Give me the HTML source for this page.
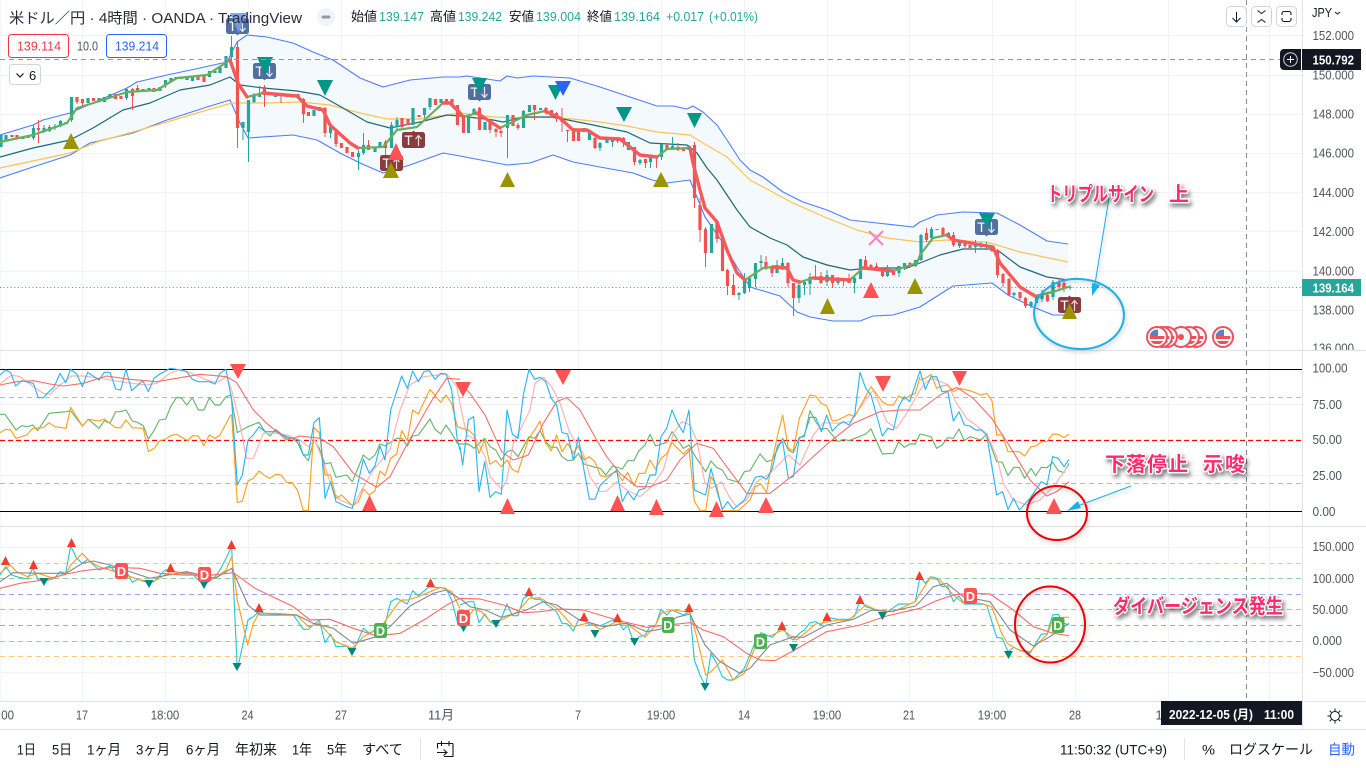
<!DOCTYPE html>
<html lang="ja"><head><meta charset="utf-8"><title>米ドル／円</title>
<style>
html,body{margin:0;padding:0;background:#fff;width:1366px;height:768px;overflow:hidden}
svg{display:block;position:absolute;left:0;top:0}
text{font-family:"Liberation Sans","Noto Sans CJK JP",sans-serif}
.p{font-size:13px;fill:#50535e}
.t{font-size:13px;fill:#50535e;text-anchor:middle}
.o{font-size:13px;fill:#26a69a}
.k{font-size:13px;fill:#131722}
.b{font-size:14px;fill:#131722}
.a{font-size:20px;font-weight:bold;fill:#ff2a6d;stroke:#fff;stroke-width:3px;paint-order:stroke;stroke-linejoin:round;filter:drop-shadow(2px 3px 2px rgba(0,0,0,.5))}
.l polyline{fill:none;stroke-linejoin:round}
.lab{font-size:13px;font-weight:bold;fill:#fff;text-anchor:middle}
</style></head><body>
<svg width="1366" height="768" viewBox="0 0 1366 768" xmlns="http://www.w3.org/2000/svg">
<defs>
<clipPath id="fc"><circle cx="0" cy="0" r="7.4"/></clipPath>
<g id="flag"><circle r="10" fill="#fff" stroke="#f0505a" stroke-width="2"/><g clip-path="url(#fc)"><rect x="-8" y="-8" width="16" height="16" fill="#fff"/><rect x="-8" y="-1" width="16" height="3" fill="#f0505a"/><rect x="-8" y="4" width="16" height="3" fill="#f0505a"/><rect x="-8" y="-8" width="9" height="7" fill="#5c80c8"/></g></g>
<g id="tdn"><rect x="0" y="0" width="23" height="16" rx="2.5" fill="#52709f"/><path d="M10 16h3l-1.500 1.500z" fill="#52709f"/><text x="6.500" y="13" font-size="14" fill="#fff" text-anchor="middle">T</text><path d="M16.500 3v10M13.500 10l3 3.500 3-3.500" stroke="#e4e8f0" stroke-width="1.200" fill="none"/></g>
<g id="tup"><rect x="0" y="0" width="23" height="16" rx="2.500" fill="#8a3c3c"/><path d="M10 0h3l-1.500-1.500z" fill="#8a3c3c"/><text x="6.500" y="13" font-size="14" fill="#fff" text-anchor="middle">T</text><path d="M16.500 14V4M13.500 7l3-3.500 3 3.500" stroke="#e8dcdc" stroke-width="1.200" fill="none"/></g>
</defs>

<!-- grid -->
<g stroke="#f0f3fa" stroke-width="1" fill="none">
<path d="M0 35.5H1302M0 75.5H1302M0 114.5H1302M0 153.5H1302M0 192.5H1302M0 231.5H1302M0 271.5H1302M0 310.5H1302"/>
<path d="M0 404.5H1302M0 475.5H1302"/>
<path d="M0 547.5H1302M0 578.5H1302M0 609.5H1302M0 641.5H1302M0 672.5H1302"/>
<path d="M1 0V701M82.5 0V701M165.5 0V701M248.5 0V701M341.5 0V701M441.5 0V701M578.5 0V701M661.5 0V701M744.5 0V701M827.5 0V701M909.5 0V701M992.5 0V701M1075.5 0V701M1168.5 0V701M1269.5 0V701"/>
</g>
<!-- band fill -->
<polygon fill="#f4f9fe" points="0,135 33,125 43,120 70,113 127,88 137,82 167,75 200,68 227,62 237,42 247,35 267,37 293,43 313,52 333,60 360,78 383,87 410,80 443,77 460,77 467,76 500,81 507,76 517,78 533,76 570,78 600,87 633,98 657,106 673,106 687,109 693,106 703,112 717,125 727,140 740,160 750,170 763,177 783,192 803,202 827,210 850,220 877,223 913,227 920,222 937,215 963,212 997,213 1020,225 1047,241 1068,244 1068,315 1053,315 1033,307 1008,295 992,283 953,286 920,307 893,315 873,316 860,321 833,321 810,317 797,312 780,296 750,287 737,267 723,243 705,217 690,180 667,183 652,180 633,173 600,167 573,162 553,155 530,163 507,165 460,156 443,153 410,165 383,173 360,163 340,153 317,140 293,135 248,138 240,123 230,100 207,107 167,120 133,133 90,143 70,155 33,167 0,178"/>
<!-- pane separators and axes -->
<path d="M0 350.5H1366M0 526.5H1366M0 701.5H1366M0 729.5H1366" stroke="#e0e3eb" stroke-width="1.2"/>
<path d="M1302.5 0V729" stroke="#e0e3eb"/>
<!-- pane1 lines -->
<g fill="none" stroke-linejoin="round">
<polyline stroke="#4f7dfb" stroke-width="1.1" points="0,135 33,125 43,120 70,113 127,88 137,82 167,75 200,68 227,62 237,42 247,35 267,37 293,43 313,52 333,60 360,78 383,87 410,80 443,77 460,77 467,76 500,81 507,76 517,78 533,76 570,78 600,87 633,98 657,106 673,106 687,109 693,106 703,112 717,125 727,140 740,160 750,170 763,177 783,192 803,202 827,210 850,220 877,223 913,227 920,222 937,215 963,212 997,213 1020,225 1047,241 1068,244"/>
<polyline stroke="#4f7dfb" stroke-width="1.1" points="0,178 33,167 70,155 90,143 133,133 167,120 207,107 230,100 240,123 248,138 293,135 317,140 340,153 360,163 383,173 410,165 443,153 460,156 507,165 530,163 553,155 573,162 600,167 633,173 652,180 667,183 690,180 705,217 723,243 737,267 750,287 780,296 797,312 810,317 833,321 860,321 873,316 893,315 920,307 953,286 992,283 1008,295 1033,307 1053,315 1068,315"/>
<polyline stroke="#fbc44f" stroke-width="1.2" points="0,168 70,153 97,142 133,132 167,122 207,110 232,103 267,103 300,102 330,105 360,113 387,119 420,119 460,113 493,117 520,118 543,117 573,119 600,122 627,126 657,132 690,135 703,143 727,157 750,180 793,203 827,218 857,230 887,238 920,242 947,240 987,242 1020,252 1068,262"/>
<polyline stroke="#1d6a78" stroke-width="1.2" points="0,157 33,148 70,140 93,128 123,110 150,103 180,90 210,85 230,77 240,85 263,88 297,91 320,95 343,108 367,122 390,128 420,122 447,115 460,116 493,120 503,122 523,117 553,117 593,125 627,132 650,143 687,145 697,153 707,168 717,180 737,210 750,227 770,238 787,245 803,257 827,265 850,270 870,268 907,268 920,263 940,255 963,249 990,249 1000,252 1020,267 1047,277 1068,280"/>
</g>
<!-- candle wicks -->
<path fill="none" stroke="#26a69a" stroke-width="1" d="M33.5 125V140M44 125V133M49.5 125V132M55 124V130M60.5 120V127M71.5 97V122M126.5 88V100M165.5 80V88M231.5 36V65M243 122V140M248.5 100V162M254 93V103M259.5 86V97M330.5 125V138M358.5 150V170M363.5 133V155M391.5 122V148M397 117V130M424.5 108V118M430 98V110M474 108V115M507.5 115V158M523.5 110V128M600 142V151M612.5 138V147M640 159V165M650.5 157V168M661.5 143V160M672.5 137V148M689 145V150M739 292V300M744.5 273V294M749.5 278V292M755.5 263V287M761 255V268M777 260V273M782.5 258V270M799 283V303M804.5 280V295M810 273V295M827 270V286M838 277V285M854.5 277V293M887.5 265V277M899 266V277M904.5 263V270M915.5 260V267M921 234V261M931.5 227V240M948.5 232V237M959.5 240V248M975.5 240V253M981 242V249M986.5 242V250M1014 292V298M1031 301V308M1042 290V302M1053 280V300M1070 285V290"/>
<path fill="none" stroke="#ef5350" stroke-width="1" d="M38.5 120V143M77 97V104M82.5 99V108M132.5 88V110M137.5 85V92M237.5 42V148M264.5 85V107M281 94V103M303.5 98V123M325 107V137M336 130V147M368.5 140V148M385.5 140V157M402 118V128M479.5 107V130M490 120V133M496 128V137M501 130V137M518 123V130M534.5 105V120M546 107V115M556.5 112V122M562 108V132M567.5 130V142M595 137V149M617.5 137V143M623.5 137V147M634.5 147V165M645.5 159V168M656.5 157V168M667 143V150M678 143V151M694.5 142V208M700 198V242M705.5 227V267M717 222V243M727.5 269V295M733.5 274V295M766 256V270M772 265V277M788 262V287M793.5 283V316M815.5 265V280M821 272V284M832.5 275V288M843.5 278V286M849 274V282M865.5 256V267M871 264V268M876.5 263V270M882.5 268V277M910 262V268M926.5 228V242M943 227V236M953.5 232V247M965 240V248M992 245V252M997.5 249V278M1003 273V287M1009 278V296M1020 292V301M1025.5 297V308M1047.5 293V302M1059 278V290M1064 279V292"/>
<!-- candle bodies -->
<path fill="none" stroke="#26a69a" stroke-width="3.2" d="M1 135V147M6 135V140M23 137V139M28 136V138M33.5 128V138M44 128V132M49.5 127V131M55 126V128M60.5 121V125M66 122V124M71.5 97V120M88 98V103M99 98V102M104.5 97V102M110 94V98M126.5 89V98M143 89V92M149 88V91M160 87V91M165.5 80V85M171 78V82M181.5 77V79M187 76V80M192.5 76V81M209.5 71V77M215 71V73M220 67V73M226 56V68M231.5 47V57M243 122V128M248.5 100V132M254 95V102M259.5 93V97M270 92V95M275.5 93V97M314 110V116M319.5 107V111M330.5 127V133M358.5 153V157M363.5 145V153M375 148V152M380 142V148M391.5 125V148M397 120V127M413 108V125M424.5 108V115M430 98V107M441 99V103M468.5 115V133M474 109V115M485 122V130M507.5 115V128M523.5 111V128M529.5 105V112M540.5 108V110M584 128V132M589.5 130V140M600 143V148M607 140V143M612.5 139V142M628.5 142V150M640 160V163M650.5 157V162M661.5 144V157M672.5 146V148M689 146V150M711.5 224V253M739 293V295M744.5 279V293M749.5 278V288M755.5 263V279M761 261V263M777 265V273M782.5 263V266M799 285V298M804.5 282V285M810 277V284M827 275V282M838 278V283M854.5 278V283M860.5 259V279M887.5 270V276M899 266V273M904.5 263V267M915.5 260V266M921 235V260M931.5 229V238M948.5 233V237M959.5 242V246M975.5 243V247M981 245V247M986.5 245V247M1014 293V295M1031 302V306M1036.5 295V303M1042 294V299M1053 282V297M1070 287V288"/>
<path fill="none" stroke="#ef5350" stroke-width="3.2" d="M12 135V137M17 135V139M38.5 128V130M77 97V102M82.5 99V103M93.5 98V101M115.5 94V99M121 96V99M132.5 89V96M137.5 88V91M154 88V92M176 77V79M198 76V80M204 76V82M237.5 47V128M264.5 87V94M281 94V96M287 94V97M292.5 94V97M298 94V98M303.5 99V114M308.5 112V116M325 108V133M336 132V144M341.5 143V148M347 147V153M352.5 152V157M368.5 145V150M385.5 142V148M402 118V127M408 119V125M419 115V117M435.5 99V105M446.5 99V103M452 99V105M457.5 105V125M463.5 115V133M479.5 108V130M490 122V130M496 129V132M501 131V133M513 115V126M518 125V128M534.5 105V110M546 108V113M551.5 110V116M556.5 113V119M562 118V122M567.5 130V131M573.5 128V141M578.5 131V141M595 138V148M617.5 138V141M623.5 138V143M634.5 147V162M645.5 159V163M656.5 157V158M667 145V150M678 147V150M683.5 148V151M694.5 145V198M700 205V230M705.5 229V253M717 222V239M722.5 240V271M727.5 270V286M733.5 285V295M766 262V268M772 266V273M788 263V283M793.5 283V298M815.5 277V279M821 276V283M832.5 275V283M843.5 279V281M849 279V283M865.5 260V267M871 265V267M876.5 266V270M882.5 269V276M893.5 270V275M910 263V267M926.5 233V240M937 229V230M943 228V236M953.5 235V245M965 243V246M970 245V248M992 246V251M997.5 250V275M1003 274V283M1009 279V295M1020 292V298M1025.5 298V306M1047.5 295V301M1059 282V287M1064 283V288"/>
<!-- thick MA -->
<g fill="none" stroke-linejoin="round" stroke-linecap="round">
<path stroke="#6aae5e" stroke-width="2.2" d="M0 142L33 135 67 123 77 108 103 100 127 92 157 90 177 78 207 75 230 60M247 97L263 93M358 148L383 147 397 130 417 127 443 103M463 117L477 113M500 128L527 115 545 111M657 157L667 149 690 148M745 280L763 268 773 267M800 282L813 278M850 280L863 268M893 271L917 263 920 255 933 238 947 235M1035 296L1053 292 1068 287"/>
<path stroke="#f55a5a" stroke-width="3.4" d="M230 60L238 83 247 97M263 93L297 96 307 106 323 110 330 125 350 143 358 148M443 103L450 103 460 113 463 117M477 113L500 128M545 111L560 118 573 130 587 130 600 138 620 139 640 155 657 157M690 148L693 163 700 190 705 208 717 222 727 250 737 273 745 280M773 267L787 268 793 280 800 282M813 278L850 280M863 268L893 271M947 235L953 240 993 247 1000 263 1020 287 1035 296"/>
</g>
<!-- pane 1 markers -->
<use href="#tdn" x="226" y="18"/><polygon points="230,13 247,13 238.5,33" fill="#7a9ce8" opacity=".9"/>
<use href="#tdn" x="253" y="63"/><polygon points="257,57 273,57 265,75" fill="#009688"/>
<polygon points="317,80 333,80 325,96" fill="#009688"/>
<use href="#tup" x="402" y="132"/><use href="#tup" x="380" y="155"/>
<polygon points="396,143 404,160 388,160" fill="#ff5252"/>
<polygon points="391,162 399,178 383,178" fill="#9b9400"/>
<polygon points="71,133 79,149 63,149" fill="#9b9400"/>
<use href="#tdn" x="468" y="84"/><polygon points="472,78 487,78 479.5,93" fill="#009688"/>
<polygon points="548,85 563,85 555.5,100" fill="#009688"/>
<polygon points="555,81 571,81 563,96" fill="#2962ff"/>
<polygon points="616,107 632,107 624,122" fill="#009688"/>
<polygon points="687,113 702,113 694.5,128" fill="#009688"/>
<polygon points="507.5,172 515,187 500,187" fill="#9b9400"/>
<polygon points="661,172 669,187 653,187" fill="#9b9400"/>
<polygon points="827.5,298 835,314 820,314" fill="#9b9400"/>
<polygon points="871,282 879,298 863,298" fill="#ff5252"/>
<polygon points="915,278 923,294 907,294" fill="#9b9400"/>
<path d="M869 231L883 245M883 231L869 245" stroke="#ff80c0" stroke-width="2"/>
<use href="#tdn" x="975" y="219"/><polygon points="979,213 995,213 987,228" fill="#009688"/>
<use href="#tup" x="1058" y="297"/><polygon points="1069.5,303 1077,319 1062,319" fill="#9b9400"/>
<!-- flags -->
<use href="#flag" x="1223" y="337"/>
<use href="#flag" x="1196" y="337"/><use href="#flag" x="1189" y="337"/>
<circle cx="1181" cy="337" r="10" fill="#f4f6fb" stroke="#f0505a" stroke-width="2"/><circle cx="1181" cy="337" r="3" fill="#f0505a"/>
<use href="#flag" x="1167" y="337"/><use href="#flag" x="1162" y="337"/><use href="#flag" x="1157" y="337"/>
<!-- dotted last price -->
<path d="M0 287.5H1302" stroke="#26a69a" stroke-width="1" stroke-dasharray="1 2.6"/>
<!-- crosshair -->
<path d="M0 59.5H1280" stroke="#9598a1" stroke-width="1" stroke-dasharray="5 4"/>
<path d="M1246.5 0V700" stroke="#868993" stroke-width="1" stroke-dasharray="5 4"/>

<!-- pane 2 levels -->
<path d="M0 397.5H1302M0 483.5H1302" stroke="#b8b8b8" stroke-width="1" stroke-dasharray="5 4"/>
<path d="M0 440.5H1302" stroke="#f00000" stroke-width="1.3" stroke-dasharray="5 3"/>
<path d="M0 369.5H1302M0 511.5H1302" stroke="#000" stroke-width="1"/>

<!-- pane 2 lines -->
<g class="l" transform="translate(0,360) scale(.33333)">
<polyline stroke="#66b56a" stroke-width="3.4" points="0,163 15,163 48,210 65,197 83,200 98,195 113,212 147,160 198,155 212,152 247,198 265,178 297,205 313,182 330,190 347,155 362,155 378,150 397,183 412,187 430,197 445,237 462,212 478,180 497,177 512,140 530,112 545,115 560,135 577,113 595,150 612,150 628,113 645,135 660,135 678,110 693,105 712,218 744,200 777,187 795,215 810,228 827,208 860,235 877,235 893,248 910,285 925,302 942,240 958,265 975,312 992,308 1008,352 1040,345 1057,365 1090,285 1108,300 1125,285 1140,252 1155,258 1190,235 1205,235 1222,258 1238,228 1255,225 1290,177 1305,208 1322,222 1338,195 1355,220 1372,250 1380,253"/>
<polyline stroke="#ffb3b3" stroke-width="3.6" points="0,72 35,45 60,50 100,80 130,100 150,103 180,75 215,48 250,48 300,55 380,68 440,75 470,70 510,40 540,28 575,40 620,60 650,68 680,50 695,90 715,170 740,295 760,295 790,220 830,220 860,225 900,240 925,260 945,240 975,320 1000,395 1020,420 1060,437 1085,390 1120,330 1170,270 1200,150 1230,75 1270,50 1340,42 1370,80 1380,130"/>
<polyline stroke="#ff9f1a" stroke-width="3.4" points="0,218 17,208 32,210 48,235 80,225 98,205 130,203 147,188 165,200 198,205 212,142 247,198 265,178 297,183 313,177 347,203 362,203 378,180 397,203 430,205 445,275 463,265 478,243 497,237 512,227 530,223 563,242 578,227 595,228 612,257 628,225 645,235 660,225 693,163"/>
<polyline stroke="#ff9f1a" stroke-width="3.4" points="695,163 712,428 727,423 744,363 760,355 777,333 795,347 810,355 827,343 843,345 860,367 877,368 893,392 910,452 925,452 942,203 958,218 975,345 992,345 1008,415 1025,405 1057,437 1075,425 1090,387 1108,405 1125,392 1140,333 1155,347 1172,295 1190,282 1205,212 1222,242 1238,150 1255,162 1290,88 1322,127 1338,105 1355,130 1372,200 1380,203"/>
<polyline stroke="#29b6f6" stroke-width="3.4" points="0,45 17,30 32,38 47,78 65,62 100,70 115,113 130,113 147,95 163,80 180,40 197,68 212,28 230,42 247,80 263,37 297,60 313,37 330,37 347,87 362,90 378,28 395,92 428,62 445,95 462,55 480,42 510,25 530,28 560,35 577,58 595,65 628,65 645,72 660,40 678,28 695,120 712,375 727,345 744,240 760,225 777,200 795,215 827,215 860,230 895,240 910,285 925,285 942,187 958,173 975,415 992,365 1008,425 1040,440 1057,445 1090,298 1108,340 1125,318 1140,258 1155,300 1172,150 1205,48 1222,85 1238,33 1255,65 1272,35 1288,32 1305,58 1322,40 1338,42 1355,90 1372,240 1380,270"/>
<polyline stroke="#f96a6a" stroke-width="3.2" points="0,75 50,65 100,62 150,72 190,78 250,70 320,48 390,58 470,65 530,55 600,43 680,50 710,68 760,150 800,190 860,240 900,228 960,235 1000,260 1060,340 1130,382 1170,350 1220,255 1290,130 1340,55 1380,58"/>
</g>
<g class="l" transform="translate(460,360) scale(.33333)">
<polyline stroke="#66b56a" stroke-width="3.4" points="0,252 25,252 42,265 74,235 90,260 107,270 124,300 141,275 157,270 174,290 207,230 224,235 240,212 257,245 274,262 290,262 306,290 323,302 340,300 355,280 372,312 405,322 421,325 437,345 458,318 487,327 503,302 522,302 537,272 555,255 570,223 587,258 620,247 636,215 670,265 687,255 703,285 737,335 753,303 770,322 787,330 803,357 835,367 853,335 870,332 900,282 920,305 937,300 968,235 985,270 1000,278 1018,232 1033,230 1050,152 1067,185 1084,208 1100,205 1134,245 1150,238 1167,242 1217,222 1233,207 1267,282 1300,280 1316,245 1333,262 1349,252 1366,252 1380,222"/>
<polyline stroke="#ffb3b3" stroke-width="3.6" points="0,130 20,225 50,240 75,290 90,350 125,388 140,360 160,250 190,190 210,150 225,70 250,52 275,80 300,130 330,220 370,280 390,350 420,395 440,393 470,365 500,390 540,410 575,380 610,330 640,220 665,185 690,195 710,240 735,370 755,385 785,365 810,415 830,440 860,420 890,365 930,340 985,285 1020,315 1060,225 1090,188 1130,190 1170,185 1210,130 1240,90 1280,185 1310,205 1340,160 1380,90"/>
<polyline stroke="#ff9f1a" stroke-width="3.4" points="0,203 25,210 42,225 57,280 74,240 90,313 107,302 124,320 141,300 157,328 174,337 190,285 207,235 224,210 240,183 257,250 274,272 290,225 306,275 323,250 340,280 355,258 372,300 388,290 405,305 421,347 437,350 470,335 487,362 503,337 522,377 537,340 555,340 570,300 587,328 603,295 620,282 636,248 670,282 687,265 703,423 720,452 737,452 753,350 770,378 787,452 803,452 835,452 870,420 886,380 903,372 920,397 937,300 953,225 968,165 985,265 1000,272 1018,175 1050,105 1067,108 1084,130 1100,137 1117,183 1134,180 1167,163 1184,170 1233,80 1267,125 1283,135 1300,135 1316,108 1333,118 1349,107 1366,100 1380,50"/>
<polyline stroke="#29b6f6" stroke-width="3.4" points="0,260 8,315 25,180 41,170 57,395 74,305 90,412 107,395 124,403 141,150 157,222 174,235 190,105 207,28 224,58 240,52 257,65 274,115 290,135 306,218 323,222 340,300 355,232 372,330 388,417 405,418 421,375 437,360 470,330 487,425 503,395 522,420 537,390 555,385 570,345 587,345 603,230 620,205 636,150 653,190 670,218 687,150 703,390 737,405 753,325 770,390 787,448 803,425 820,448 853,420 886,352 903,348 920,358 937,325 953,255 968,245 985,355 1000,350 1018,235 1033,225 1050,172 1067,172 1084,215 1100,165 1117,213 1134,195 1150,185 1167,195 1184,165 1200,37 1217,85 1233,105 1267,228 1283,205 1300,210 1316,140 1333,110 1349,125 1380,32"/>
<polyline stroke="#f96a6a" stroke-width="3.2" points="0,70 30,100 75,165 125,275 160,300 205,285 250,190 290,125 320,113 360,150 410,240 440,290 480,340 530,380 570,380 620,360 660,300 710,250 760,265 800,320 860,400 930,400 1000,345 1060,290 1110,245 1180,190 1260,155 1320,150 1380,150"/>
</g>
<g class="l" transform="translate(920,360) scale(.33333)">
<polyline stroke="#66b56a" stroke-width="3.4" points="0,222 33,230 50,265 66,255 83,233 100,235 117,207 133,242 150,230 183,240 200,222 230,305 247,307 264,347 281,322 298,322 314,355 333,325 347,347 364,322 381,323 398,307 415,332 432,338 447,310"/>
<polyline stroke="#ffb3b3" stroke-width="3.6" points="0,90 20,65 40,55 85,75 110,130 140,175 200,220 230,290 250,370 280,420 320,435 360,420 400,380 447,315"/>
<polyline stroke="#ff9f1a" stroke-width="3.4" points="0,60 16,55 33,43 50,85 66,78 83,75 100,95 117,85 150,92 183,105 200,100 216,122 230,225 247,225 264,275 298,275 314,288 333,260 347,258 364,245 381,245 398,222 415,223 432,233 447,222"/>
<polyline stroke="#29b6f6" stroke-width="3.4" points="0,32 16,88 33,50 50,50 66,95 83,93 100,183 117,155 133,195 150,198 167,210 183,210 200,225 230,405 248,395 264,448 281,415 298,450 330,415 364,365 381,375 398,290 415,295 432,320 447,298"/>
<polyline stroke="#f96a6a" stroke-width="3.2" points="0,150 60,105 110,82 160,115 215,175 270,260 330,360 380,408 410,395 447,365"/>
</g>
<!-- pane 2 markers -->
<g fill="#ff5252">
<polygon points="230,364 246,364 238,379"/><polygon points="455,382 471,382 463,397"/><polygon points="555,370 571,370 563,385"/><polygon points="875,376 891,376 883,392"/><polygon points="952,371 967,371 959.5,386"/>
<polygon points="369.5,495 377,511 362,511"/><polygon points="507.5,498 515,514 500,514"/><polygon points="617.5,495 625,511 610,511"/><polygon points="656.5,499 664,515 649,515"/><polygon points="716.5,501 724,517 709,517"/><polygon points="766,497 774,513 758,513"/><polygon points="1054,498 1062,514 1046,514"/>
</g>

<!-- pane 3 levels -->
<g stroke-width="1" stroke-dasharray="5 4">
<path d="M0 563.5H1302M0 656.5H1302" stroke="#ffc874"/>
<path d="M0 578.5H1302M0 641.5H1302" stroke="#94d098"/>
<path d="M0 594.5H1302M0 625.5H1302" stroke="#93abf7"/>
<path d="M0 609.5H1302" stroke="#f6a5a5"/>
</g>
<!-- pane 3 lines -->
<g class="l" transform="translate(0,530) scale(.33333)">
<polyline stroke="#26c6da" stroke-width="3.4" points="0,135 17,110 35,135 50,140 82,147 98,115 115,150 130,150 147,150 163,145 180,125 197,130 212,48 230,85 247,100 263,88 297,120 330,108 362,145 380,125 397,157 412,148 445,158 462,155 495,120 512,120 545,130 577,132 595,150 612,165 645,140 660,120 678,85 695,50 712,420 744,270 760,260 777,245 795,250 880,255 910,298 925,298 958,270 975,338 992,312 1008,350 1040,348 1057,370 1090,295 1108,310 1125,300 1140,290 1155,285 1172,215 1190,205 1222,222 1238,182 1255,197 1288,170 1338,175 1355,210 1372,275 1380,290"/>
<polyline stroke="#ff9f1a" stroke-width="3.4" points="0,130 30,105 50,125 82,140 115,130 160,145 198,130 212,105 247,70 270,95 297,110 362,130 420,150 460,155 512,125 560,128 612,145 645,145 678,120 695,80 712,210 743,345 760,280 777,250 830,250 890,255 925,290 958,280 1008,335 1057,355 1090,320 1140,295 1190,225 1205,210 1222,210 1255,200 1322,172 1355,185 1380,235"/>
<polyline stroke="#868993" stroke-width="3.4" points="0,155 40,128 130,130 198,130 247,100 280,93 330,105 450,145 560,125 645,145 695,115 744,225 780,255 890,255 940,280 1000,295 1060,340 1130,320 1170,290 1230,228 1300,190 1338,180 1380,207"/>
<polyline stroke="#ff6b6b" stroke-width="3.4" points="0,175 60,160 130,150 200,132 250,122 340,112 420,115 480,130 550,135 640,135 700,128 765,175 880,230 930,270 990,268 1060,295 1130,318 1200,310 1280,265 1340,225 1380,205"/>
</g>
<g class="l" transform="translate(460,530) scale(.33333)">
<polyline stroke="#26c6da" stroke-width="3.4" points="0,225 25,215 41,215 57,278 74,252 90,275 107,285 124,265 141,222 157,257 174,257 190,205 207,195 224,208 240,208 290,245 306,280 323,282 340,303 355,270 372,265 388,285 421,287 437,280 470,265 490,300 503,285 522,340 537,320 555,315 570,290 587,285 603,238 620,255 636,240 670,255 690,245 703,390 720,435 737,470 753,370 770,400 787,440 803,450 820,450 853,415 886,335 903,308 920,315 937,322 953,305 968,290 985,320 1000,330 1018,310 1033,300 1050,278 1067,275 1084,285 1100,262 1134,268 1167,268 1184,258 1200,210 1217,230 1250,240 1283,245 1316,222 1349,222 1366,215 1380,140"/>
<polyline stroke="#ff9f1a" stroke-width="3.4" points="0,265 30,255 41,238 65,245 90,275 124,270 174,245 207,205 240,203 290,235 340,290 388,278 421,298 470,275 503,283 555,322 587,285 603,250 636,240 690,247 710,320 737,435 753,425 787,390 820,450 853,430 886,350 903,320 937,315 968,300 1010,330 1067,282 1134,270 1167,270 1217,225 1250,240 1300,245 1366,215 1380,190"/>
<polyline stroke="#868993" stroke-width="3.4" points="0,205 30,230 75,240 125,262 200,240 250,215 290,225 355,268 430,290 500,280 560,305 600,298 650,262 690,252 735,345 780,395 840,430 870,415 930,345 1000,320 1030,322 1100,285 1180,268 1235,240 1290,245 1366,228 1380,215"/>
<polyline stroke="#ff6b6b" stroke-width="3.4" points="0,205 60,207 130,225 190,248 240,245 300,237 370,240 470,270 560,292 690,278 730,300 790,320 860,370 900,390 945,392 1000,362 1100,305 1200,285 1280,258 1380,235"/>
</g>
<g class="l" transform="translate(920,530) scale(.33333)">
<polyline stroke="#26c6da" stroke-width="3.4" points="0,140 16,160 33,140 50,145 66,170 83,168 100,215 117,198 133,222 183,222 200,225 230,322 247,325 264,365 281,352 298,360 330,370 364,312 381,312 398,255 415,253 432,280 447,285"/>
<polyline stroke="#ff9f1a" stroke-width="3.4" points="0,190 30,145 60,150 100,195 130,220 183,220 215,230 245,310 264,342 300,362 330,365 364,330 381,315 398,270 430,262 447,262"/>
<polyline stroke="#868993" stroke-width="3.4" points="0,215 40,170 80,160 130,200 210,215 270,300 340,348 390,320 447,280"/>
<polyline stroke="#ff6b6b" stroke-width="3.4" points="0,235 50,212 100,195 150,190 210,192 280,240 340,290 400,310 447,317"/>
</g>
<!-- pane 3 markers -->
<g fill="#f23c32">
<polygon points="5.5,556 10,565 1,565"/><polygon points="33.5,560 38,569 29,569"/><polygon points="71.5,538 76,547 67,547"/><polygon points="170.5,563 175,572 166,572"/><polygon points="231.5,540 236,549 227,549"/><polygon points="259,603 263.5,612 254.5,612"/><polygon points="430.5,578 435,587 426,587"/>
<polygon points="529,587 533.5,596 524.5,596"/><polygon points="584,612 588.5,621 579.5,621"/><polygon points="617.5,613 622,622 613,622"/><polygon points="689,603 693.5,612 684.5,612"/><polygon points="782,621 786.5,630 777.5,630"/><polygon points="827,612 831.5,621 822.5,621"/><polygon points="860,595 864.5,604 855.5,604"/><polygon points="919.5,571 924,580 915,580"/>
</g>
<g fill="#00897b">
<polygon points="39.5,578 48.5,578 44,586"/><polygon points="144.5,580 153.5,580 149,588"/><polygon points="199.5,581 208.5,581 204,589"/><polygon points="232.5,663 241.5,663 237,671"/><polygon points="347.5,648 356.5,648 352,656"/>
<polygon points="459,624 468,624 463.5,632"/><polygon points="491.5,620 500.5,620 496,628"/><polygon points="590.5,630 599.5,630 595,638"/><polygon points="630,638 639,638 634.5,646"/><polygon points="700.5,683 709.5,683 705,691"/><polygon points="789,644 798,644 793.5,652"/><polygon points="878,612 887,612 882.5,620"/><polygon points="1004,651 1013,651 1008.5,659"/>
</g>
<g>
<rect x="115" y="563" width="13" height="16" rx="2.5" fill="#ff5252"/><text class="lab" x="121.5" y="576">D</text>
<rect x="198" y="567" width="13" height="15" rx="2.5" fill="#ff5252"/><text class="lab" x="204.5" y="579.500">D</text>
<rect x="457" y="610" width="13" height="16" rx="2.5" fill="#ff5252"/><text class="lab" x="463.5" y="623">D</text>
<rect x="964" y="588" width="13" height="16" rx="2.5" fill="#ff5252"/><text class="lab" x="970.5" y="601">D</text>
<rect x="374" y="623" width="13" height="15" rx="2.5" fill="#4caf50"/><text class="lab" x="380.5" y="635.500">D</text>
<rect x="662" y="617" width="12.500" height="16" rx="2.5" fill="#4caf50"/><text class="lab" x="668" y="630">D</text>
<rect x="754" y="634" width="13" height="15" rx="2.5" fill="#4caf50"/><text class="lab" x="760.5" y="646.500">D</text>
<rect x="1052" y="617" width="12.500" height="16" rx="2.5" fill="#4caf50"/><text class="lab" x="1058" y="630">D</text>
</g>

<!-- annotations -->
<g fill="none" style="filter:drop-shadow(1px 2px 2px rgba(0,0,0,.25))">
<ellipse cx="1079" cy="314" rx="45" ry="35" stroke="#1bb0ea" stroke-width="2" transform="rotate(4 1079 314)"/>
<ellipse cx="1057" cy="513" rx="30" ry="27" stroke="#f00000" stroke-width="2"/>
<ellipse cx="1050" cy="624.500" rx="35" ry="38" stroke="#f00000" stroke-width="2"/>
<path d="M1109 198L1094 290" stroke="#1bb0ea" stroke-width="1"/>
<path d="M1131 486L1075 507" stroke="#1bb0ea" stroke-width="1"/>
</g>
<polygon points="1092,296 1092,283 1100,285" fill="#1bb0ea"/>
<polygon points="1067,511 1078,501 1081,508" fill="#1bb0ea"/>
<text class="a" x="1047" y="201" textLength="107" lengthAdjust="spacingAndGlyphs">トリプルサイン</text>
<text class="a" x="1169" y="201">上</text>
<text class="a" x="1105" y="471" textLength="83">下落停止</text>
<text class="a" x="1203" y="471" textLength="42">示唆</text>
<text class="a" x="1113" y="613" textLength="170" lengthAdjust="spacingAndGlyphs">ダイバージェンス発生</text>

<!-- legend -->
<text x="9" y="23" font-size="15" fill="#2a2e39" textLength="293" lengthAdjust="spacingAndGlyphs">米ドル／円 · 4時間 · OANDA · TradingView</text>
<circle cx="326" cy="17" r="9" fill="#f0f3fa"/><rect x="321.500" y="15.500" width="9" height="3" rx="1.5" fill="#9598a1"/>
<text class="k" x="351" y="21" textLength="26" lengthAdjust="spacingAndGlyphs">始値</text><text class="o" x="379" y="21" textLength="45" lengthAdjust="spacingAndGlyphs">139.147</text>
<text class="k" x="430" y="21" textLength="26" lengthAdjust="spacingAndGlyphs">高値</text><text class="o" x="458" y="21" textLength="44" lengthAdjust="spacingAndGlyphs">139.242</text>
<text class="k" x="509" y="21" textLength="25" lengthAdjust="spacingAndGlyphs">安値</text><text class="o" x="536" y="21" textLength="45" lengthAdjust="spacingAndGlyphs">139.004</text>
<text class="k" x="587" y="21" textLength="25" lengthAdjust="spacingAndGlyphs">終値</text><text class="o" x="614" y="21" textLength="46" lengthAdjust="spacingAndGlyphs">139.164</text>
<text class="o" x="666" y="21" textLength="38" lengthAdjust="spacingAndGlyphs">+0.017</text><text class="o" x="709" y="21" textLength="49" lengthAdjust="spacingAndGlyphs">(+0.01%)</text>

<rect x="8.500" y="34.500" width="60" height="23" rx="3" fill="#fff" stroke="#f23645"/>
<text x="17" y="50.500" font-size="13" fill="#f23645" textLength="44" lengthAdjust="spacingAndGlyphs">139.114</text>
<text x="77" y="50.500" font-size="13" fill="#50535e" textLength="21" lengthAdjust="spacingAndGlyphs">10.0</text>
<rect x="106.500" y="34.500" width="60" height="23" rx="3" fill="#fff" stroke="#2962ff"/>
<text x="115" y="50.500" font-size="13" fill="#2962ff" textLength="44" lengthAdjust="spacingAndGlyphs">139.214</text>
<rect x="9.500" y="64.500" width="31" height="20" rx="3" fill="#fff" stroke="#d1d4dc"/>
<path d="M16.500 73.500l3.500 3.500 3.500-3.500" fill="none" stroke="#131722" stroke-width="1.200"/>
<text x="29" y="80" font-size="13" fill="#131722">6</text>

<!-- axis bg cover -->
<rect x="1303" y="0" width="63" height="350" fill="#fff"/><rect x="1303" y="351" width="63" height="175" fill="#fff"/><rect x="1303" y="527" width="63" height="174" fill="#fff"/>

<!-- top right buttons -->
<g fill="#fff" stroke="#d1d4dc"><rect x="1226.500" y="6.500" width="20" height="20" rx="4"/><rect x="1251.500" y="6.500" width="20" height="20" rx="4"/><rect x="1276.500" y="6.500" width="20" height="20" rx="4"/></g>
<g fill="none" stroke="#131722" stroke-width="1">
<path d="M1236.500 12V22M1232.500 18l4 4 4-4"/>
<path d="M1257.500 10.500l4 3 4-3M1257.500 22.500l4-3 4 3"/>
<path d="M1282 15v-1.500a2 2 0 0 1 2-2h5a2 2 0 0 1 2 2V15M1282 18v1.500a2 2 0 0 0 2 2h5a2 2 0 0 0 2-2V18" stroke-width="1.100"/>
</g>

<!-- price axis -->
<text x="1312" y="17" font-size="13" fill="#131722" textLength="20" lengthAdjust="spacingAndGlyphs">JPY</text>
<path d="M1335 12l2.500 2 2.500-2" fill="none" stroke="#131722"/>
<text class="p" x="1312.500" y="40" textLength="41.500" lengthAdjust="spacingAndGlyphs">152.000</text>
<text class="p" x="1312.500" y="79.500" textLength="41.500" lengthAdjust="spacingAndGlyphs">150.000</text>
<text class="p" x="1312.500" y="118.500" textLength="41.500" lengthAdjust="spacingAndGlyphs">148.000</text>
<text class="p" x="1312.500" y="157.500" textLength="41.500" lengthAdjust="spacingAndGlyphs">146.000</text>
<text class="p" x="1312.500" y="197" textLength="41.500" lengthAdjust="spacingAndGlyphs">144.000</text>
<text class="p" x="1312.500" y="236" textLength="41.500" lengthAdjust="spacingAndGlyphs">142.000</text>
<text class="p" x="1312.500" y="275.500" textLength="41.500" lengthAdjust="spacingAndGlyphs">140.000</text>
<text class="p" x="1312.500" y="314.500" textLength="41.500" lengthAdjust="spacingAndGlyphs">138.000</text>
<text class="p" x="1312.500" y="352.500" textLength="41.500" lengthAdjust="spacingAndGlyphs">136.000</text>
<rect x="1303" y="351" width="63" height="5" fill="#fff"/>
<path d="M1303 350.500H1366" stroke="#e0e3eb" stroke-width="1.200"/>
<text class="p" x="1312.500" y="372.500" textLength="35" lengthAdjust="spacingAndGlyphs">100.00</text>
<text class="p" x="1312.500" y="409" textLength="29.500" lengthAdjust="spacingAndGlyphs">75.00</text>
<text class="p" x="1312.500" y="444" textLength="29.500" lengthAdjust="spacingAndGlyphs">50.00</text>
<text class="p" x="1312.500" y="480" textLength="29.500" lengthAdjust="spacingAndGlyphs">25.00</text>
<text class="p" x="1312.500" y="516" textLength="23" lengthAdjust="spacingAndGlyphs">0.00</text>
<text class="p" x="1312.500" y="551" textLength="41.500" lengthAdjust="spacingAndGlyphs">150.000</text>
<text class="p" x="1312.500" y="583" textLength="41.500" lengthAdjust="spacingAndGlyphs">100.000</text>
<text class="p" x="1312.500" y="614" textLength="35.500" lengthAdjust="spacingAndGlyphs">50.000</text>
<text class="p" x="1312.500" y="645" textLength="29.500" lengthAdjust="spacingAndGlyphs">0.000</text>
<text class="p" x="1312.500" y="677" textLength="41.500" lengthAdjust="spacingAndGlyphs">−50.000</text>

<rect x="1302" y="279" width="59" height="17" fill="#26a69a"/>
<text x="1312.500" y="292.500" font-size="13" font-weight="bold" fill="#fff" textLength="41.500" lengthAdjust="spacingAndGlyphs">139.164</text>
<path d="M1284 49h17v21h-17a4 4 0 0 1-4-4v-13a4 4 0 0 1 4-4z" fill="#131722"/>
<rect x="1302" y="49" width="59" height="21" fill="#131722"/>
<circle cx="1290.500" cy="59.500" r="6.800" fill="none" stroke="#d1d4dc" stroke-width="1"/><path d="M1287 59.500h7M1290.500 56v7" stroke="#fff" stroke-width="1"/>
<text x="1312.500" y="64.500" font-size="13" font-weight="bold" fill="#fff" textLength="41.500" lengthAdjust="spacingAndGlyphs">150.792</text>

<!-- time axis -->
<text x="-2" y="719.500" font-size="13" fill="#50535e" textLength="16" lengthAdjust="spacingAndGlyphs">:00</text>
<text class="t" x="82" y="719.500" textLength="12" lengthAdjust="spacingAndGlyphs">17</text>
<text class="t" x="165" y="719.500" textLength="28.500" lengthAdjust="spacingAndGlyphs">18:00</text>
<text class="t" x="247.500" y="719.500" textLength="12" lengthAdjust="spacingAndGlyphs">24</text>
<text class="t" x="341" y="719.500" textLength="12" lengthAdjust="spacingAndGlyphs">27</text>
<text class="t" x="441" y="719.500" textLength="26" lengthAdjust="spacingAndGlyphs">11月</text>
<text class="t" x="578" y="719.500" textLength="6" lengthAdjust="spacingAndGlyphs">7</text>
<text class="t" x="661" y="719.500" textLength="28.500" lengthAdjust="spacingAndGlyphs">19:00</text>
<text class="t" x="744" y="719.500" textLength="12" lengthAdjust="spacingAndGlyphs">14</text>
<text class="t" x="827" y="719.500" textLength="28.500" lengthAdjust="spacingAndGlyphs">19:00</text>
<text class="t" x="909" y="719.500" textLength="12" lengthAdjust="spacingAndGlyphs">21</text>
<text class="t" x="992" y="719.500" textLength="28.500" lengthAdjust="spacingAndGlyphs">19:00</text>
<text class="t" x="1075" y="719.500" textLength="12" lengthAdjust="spacingAndGlyphs">28</text>
<text class="t" x="1159" y="719.500">1</text>
<rect x="1161" y="701" width="141" height="24" fill="#131722"/>
<text x="1169" y="719" font-size="13" font-weight="bold" fill="#fff" textLength="84" lengthAdjust="spacingAndGlyphs">2022-12-05 (月)</text>
<text x="1264" y="719" font-size="13" font-weight="bold" fill="#fff" textLength="30" lengthAdjust="spacingAndGlyphs">11:00</text>
<g fill="none" stroke="#131722" stroke-width="1"><circle cx="1335" cy="716" r="4.500"/><path d="M1335 708.500v2.500M1335 721v2.500M1327.500 716h2.500M1340 716h2.500M1329.700 710.700l1.800 1.800M1338.500 719.500l1.800 1.800M1340.300 710.700l-1.800 1.800M1331.500 719.500l-1.800 1.800"/></g>

<!-- bottom bar -->
<text class="b" x="17" y="754.500" textLength="19" lengthAdjust="spacingAndGlyphs">1日</text>
<text class="b" x="52" y="754.500" textLength="20" lengthAdjust="spacingAndGlyphs">5日</text>
<text class="b" x="87" y="754.500" textLength="34" lengthAdjust="spacingAndGlyphs">1ヶ月</text>
<text class="b" x="136" y="754.500" textLength="34" lengthAdjust="spacingAndGlyphs">3ヶ月</text>
<text class="b" x="186" y="754.500" textLength="34" lengthAdjust="spacingAndGlyphs">6ヶ月</text>
<text class="b" x="235" y="754.500" textLength="42" lengthAdjust="spacingAndGlyphs">年初来</text>
<text class="b" x="292" y="754.500" textLength="20" lengthAdjust="spacingAndGlyphs">1年</text>
<text class="b" x="327" y="754.500" textLength="20" lengthAdjust="spacingAndGlyphs">5年</text>
<text class="b" x="362" y="754.500" textLength="41" lengthAdjust="spacingAndGlyphs">すべて</text>
<path d="M420.500 738V760M1184.500 738V760" stroke="#e0e3eb"/>
<g fill="none" stroke="#131722" stroke-width="1.100"><path d="M437 743.500H453M441.500 741v5M449 741v5M437.500 743.500v5M453 743.500v13h-9"/><path d="M437 752.500h10M443.500 749.500l3.500 3-3.500 3"/></g>
<text class="b" x="1060" y="754.500" textLength="107" lengthAdjust="spacingAndGlyphs">11:50:32 (UTC+9)</text>
<text class="b" x="1202" y="754.500" textLength="13" lengthAdjust="spacingAndGlyphs">%</text>
<text class="b" x="1229" y="754.500" textLength="84" lengthAdjust="spacingAndGlyphs">ログスケール</text>
<text class="b" x="1328" y="754.500" textLength="27" lengthAdjust="spacingAndGlyphs" style="fill:#2962ff">自動</text>
</svg>
</body></html>
